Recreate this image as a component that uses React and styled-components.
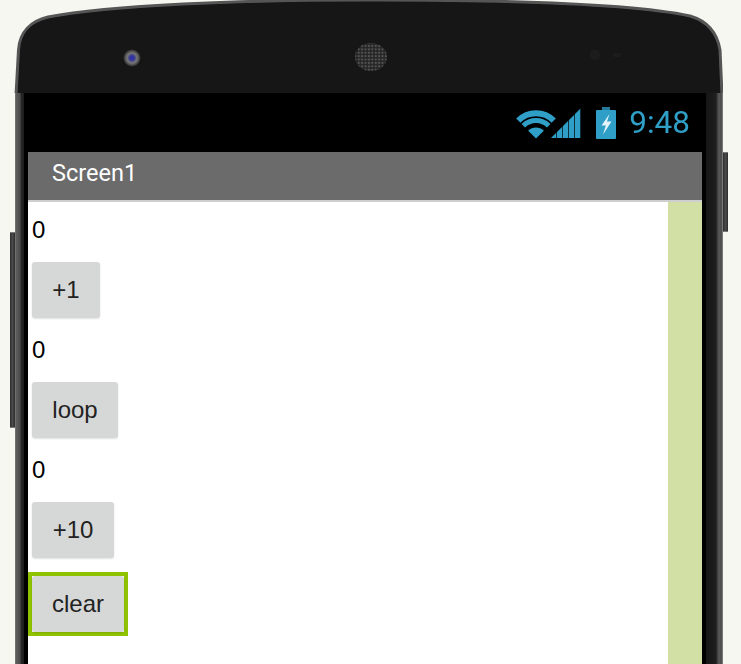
import React from 'react';
import styled, { createGlobalStyle } from 'styled-components';

const BLUE = '#2f9fc8';

const GlobalStyle = createGlobalStyle`
  html, body {
    margin: 0;
    padding: 0;
    height: 664px;
    overflow: hidden;
    background: #f6f7f1;
  }
`;

const Page = styled.div`
  width: 741px;
  height: 664px;
  overflow: hidden;
  padding-left: 14px;
  box-sizing: border-box;
`;

const Phone = styled.div`
  position: relative;
  width: 709px;
  height: 664px;
  display: flex;
  flex-direction: column;
`;

const SideButton = styled.div`
  position: absolute;
  top: ${(p) => p.$top}px;
  height: ${(p) => p.$height}px;
  width: 5px;
  ${(p) => (p.$side === 'left' ? 'left: -4px;' : 'right: -5px;')}
  background: linear-gradient(90deg, #2e2e2e, #4a4a4a 50%, #2c2c2c);
  border-top: 1px solid #777;
  border-bottom: 1px solid #777;
  box-sizing: border-box;
`;

const Bezel = styled.svg`
  display: block;
  flex: none;
  width: 709px;
  height: 93px;
`;

const Body = styled.div`
  flex: 1;
  display: flex;
  min-height: 0;
`;

const LeftEdge = styled.div`
  width: 9px;
  margin-left: 1px;
  background: linear-gradient(90deg, #7c7c7c 0, #5c5c5c 15%, #4c4c4c 55%, #262626 70%, #1c1c1c 100%);
`;

const RightEdge = styled.div`
  width: 17px;
  background: linear-gradient(90deg, #161616 0, #1e1e1e 58%, #5a5a5a 76%, #4a4a4a 90%, #8c8c8c 100%);
`;

const Screen = styled.div`
  flex: 1;
  background: #000;
  display: flex;
  flex-direction: column;
  padding: 0 4px;
`;

const StatusBar = styled.div`
  height: 59px;
  flex: none;
  display: flex;
  align-items: center;
  justify-content: flex-end;
  padding-right: 16px;
  margin-right: -4px;
`;

const StatusIcon = styled.svg`
  display: block;
  flex: none;
  margin-right: ${(p) => p.$gap}px;
  filter: blur(0.6px);
`;

const Clock = styled.div`
  font-family: Roboto, sans-serif;
  font-size: 31.5px;
  line-height: 59px;
  color: ${BLUE};
  filter: blur(0.4px);
`;

const TitleBar = styled.div`
  height: 48px;
  flex: none;
  box-sizing: border-box;
  padding-left: 24px;
  background: #6b6b6b;
  color: #fff;
  font-family: Roboto, sans-serif;
  font-size: 23.5px;
  line-height: 43px;
`;

const Divider = styled.div`
  height: 2px;
  flex: none;
  background: #cfcfcf;
`;

const Content = styled.div`
  flex: 1;
  display: flex;
  min-height: 0;
`;

const Column = styled.div`
  flex: 1;
  background: #fff;
  display: flex;
  flex-direction: column;
  align-items: flex-start;
  gap: 18px;
  padding: 14px 0 0 4px;
`;

const Scrollbar = styled.div`
  width: 34px;
  background: #d3e0a5;
`;

const Label = styled.div`
  font-family: 'Liberation Sans', Arial, sans-serif;
  font-size: 24px;
  line-height: 28px;
  color: #000;
`;

const Button = styled.div`
  width: ${(p) => p.$width}px;
  height: 56px;
  text-align: center;
  font-family: 'Liberation Sans', Arial, sans-serif;
  font-size: 24px;
  line-height: 56px;
  color: #222;
  background: #d6d8d7;
  border-radius: 3px;
  box-shadow: 0 1px 2px rgba(0, 0, 0, 0.12);
`;

const Selection = styled.div`
  border: 4px solid #8fc202;
  margin: -4px 0 0 -4px;
`;

const PhoneTop = () => (
  <Bezel viewBox="14 0 709 93">
    <defs>
      <radialGradient id="lens">
        <stop offset="0" stopColor="#2a2ab8" />
        <stop offset="0.28" stopColor="#3a3a90" />
        <stop offset="0.55" stopColor="#777" />
        <stop offset="0.8" stopColor="#4a4a4a" />
        <stop offset="1" stopColor="#141414" />
      </radialGradient>
      <pattern id="mesh" width="3.4" height="3.4" patternUnits="userSpaceOnUse">
        <rect width="3.4" height="3.4" fill="#262626" />
        <circle cx="1.7" cy="1.7" r="1.1" fill="#555" />
      </pattern>
      <filter id="soft">
        <feGaussianBlur stdDeviation="0.7" />
      </filter>
    </defs>
    <path
      d="M16,95 L18.5,50 C19.5,32 31,21 48,17 C110,5 240,0 370,0 C500,0 630,3 690,16 C707,21 717,32 720,50 L722,95 Z"
      fill="#131313"
      stroke="#555"
      strokeWidth="3"
      filter="url(#soft)"
    />
    <circle cx="132" cy="58" r="9" fill="url(#lens)" filter="url(#soft)" />
    <ellipse cx="371" cy="57" rx="16" ry="14" fill="url(#mesh)" filter="url(#soft)" />
    <circle cx="595" cy="55" r="5" fill="#1e1e1e" filter="url(#soft)" />
    <ellipse cx="617" cy="55" rx="4" ry="2" fill="#1e1e1e" filter="url(#soft)" />
  </Bezel>
);

const WifiIcon = () => (
  <StatusIcon $gap={-5} width="40" height="32" viewBox="0 0 40 32">
    <g fill="none" stroke={BLUE}>
      <path d="M2.3,13.7 A25,25 0 0 1 37.7,13.7" strokeWidth="6" />
      <path d="M7.3,18.7 A18,18 0 0 1 32.7,18.7" strokeWidth="5" />
    </g>
    <path d="M12.2,23.8 A11,11 0 0 1 27.8,23.8 L20,31.6 Z" fill={BLUE} />
  </StatusIcon>
);

const SignalIcon = () => (
  <StatusIcon $gap={15} width="30" height="30" viewBox="0 0 30 30">
    <defs>
      <clipPath id="signal">
        <polygon points="0,30 30,0 30,30" />
      </clipPath>
    </defs>
    <g clipPath="url(#signal)" fill={BLUE}>
      {[0, 6, 12, 18, 24].map((x) => (
        <rect key={x} x={x} y="0" width="5.3" height="30" />
      ))}
    </g>
  </StatusIcon>
);

const BatteryIcon = () => (
  <StatusIcon $gap={13} width="20" height="32" viewBox="0 0 20 32">
    <rect x="6" y="0" width="8" height="4" fill="#24799a" />
    <rect x="0" y="3" width="20" height="29" rx="1" fill={BLUE} />
    <path d="M13.5,7 L5.5,18.5 L9.8,18.5 L7,27.5 L15.5,14.5 L11,14.5 Z" fill="#e2f4fa" />
  </StatusIcon>
);

const App = () => (
  <Page>
    <GlobalStyle />
    <Phone>
      <SideButton $side="left" $top={232} $height={196} />
      <SideButton $side="right" $top={152} $height={80} />
      <PhoneTop />
      <Body>
        <LeftEdge />
        <Screen>
          <StatusBar>
            <WifiIcon />
            <SignalIcon />
            <BatteryIcon />
            <Clock>9:48</Clock>
          </StatusBar>
          <TitleBar>Screen1</TitleBar>
          <Divider />
          <Content>
            <Column>
              <Label>0</Label>
              <Button $width={68}>+1</Button>
              <Label>0</Label>
              <Button $width={86}>loop</Button>
              <Label>0</Label>
              <Button $width={82}>+10</Button>
              <Selection>
                <Button $width={92}>clear</Button>
              </Selection>
            </Column>
            <Scrollbar />
          </Content>
        </Screen>
        <RightEdge />
      </Body>
    </Phone>
  </Page>
);

export default App;
